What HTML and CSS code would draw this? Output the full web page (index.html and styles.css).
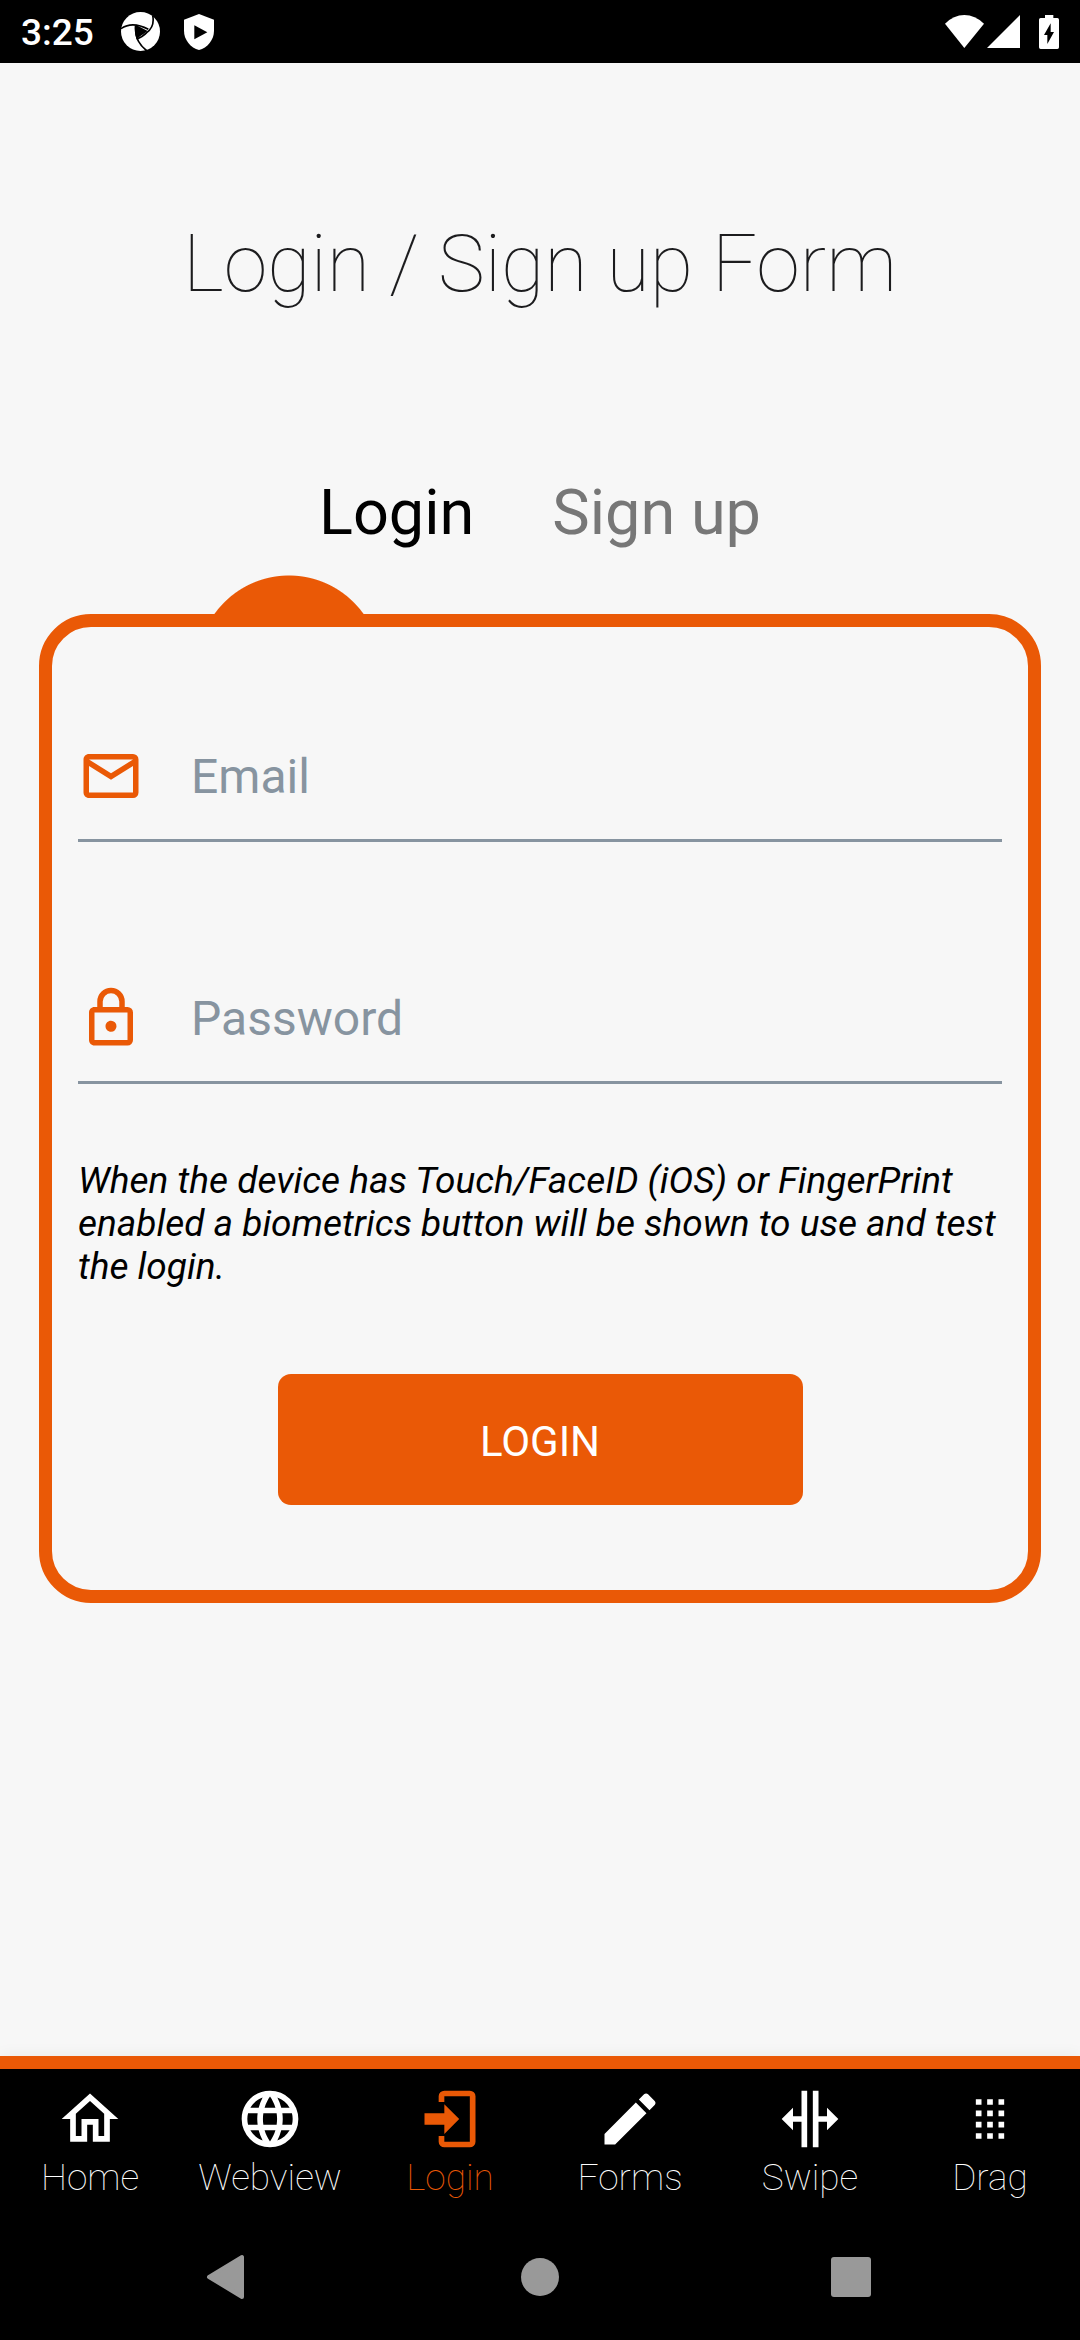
FILE: index.html
```html
<!DOCTYPE html>
<html lang="en">
<head>
<meta charset="utf-8">
<meta name="viewport" content="width=device-width, initial-scale=1">
<title>Login / Sign up Form</title>
<link rel="stylesheet" href="styles.css">
</head>
<body>
<header class="status-bar">
  <div class="status-left">
    <time class="clock">3:25</time>
    <svg class="app-icon" viewBox="0 0 117 117" aria-hidden="true">
      <circle cx="58.500" cy="58.500" r="58.500" fill="#fff"/>
      <path d="M44 38L80 57L46 81Q40 58 44 38Z" fill="#000"/>
      <path d="M0 50Q34 26 82 52M95 10Q102 44 77 62Q64 76 46 81M44 38Q38 86 78 117" fill="none" stroke="#000" stroke-width="5"/>
    </svg>
    <svg class="shield-icon" viewBox="0 0 90 108" aria-hidden="true">
      <path d="M45 0L90 17V50C90 78 70 101 45 108C20 101 0 78 0 50V17Z" fill="#fff"/>
      <path d="M31 34V76L70 55Z" fill="#000"/>
    </svg>
  </div>
  <div class="status-right">
    <svg class="wifi-icon" viewBox="0 0 117 99" aria-hidden="true"><path d="M0 26Q26 0 58 0T117 26L58 99Z" fill="#fff"/></svg>
    <svg class="signal-icon" viewBox="0 0 33 33" aria-hidden="true"><path d="M33 0V33H0Z" fill="#fff"/></svg>
    <svg class="battery-icon" viewBox="0 0 60 102" aria-hidden="true">
      <path d="M18 0H43V9H55Q60 9 60 14V97Q60 102 55 102H5Q0 102 0 97V14Q0 9 5 9H18Z" fill="#fff"/>
      <path d="M35 25V51H45L25 87V60H15Z" fill="#000"/>
    </svg>
  </div>
</header>

<main class="screen">
  <h1 class="title">Login / Sign up Form</h1>
  <div class="form-tabs" role="tablist">
    <button class="form-tab is-active" type="button" role="tab" aria-selected="true">Login</button>
    <button class="form-tab" type="button" role="tab" aria-selected="false">Sign up</button>
  </div>
  <form class="card">
    <div class="field">
      <label class="field-label" for="email" aria-label="Email">
        <svg class="field-icon" viewBox="0 0 24 24" aria-hidden="true"><path d="M4,4H20A2,2 0 0,1 22,6V18A2,2 0 0,1 20,20H4C2.890,20 2,19.100 2,18V6C2,4.890 2.890,4 4,4M12,11L20,6H4L12,11M4,18H20V8.370L12,13.360L4,8.370V18Z"/></svg>
      </label>
      <input class="field-input" id="email" type="email" placeholder="Email">
    </div>
    <div class="field">
      <label class="field-label" for="password" aria-label="Password">
        <svg class="field-icon" viewBox="0 0 24 24" aria-hidden="true"><path d="M12,17C10.890,17 10,16.100 10,15C10,13.890 10.890,13 12,13A2,2 0 0,1 14,15A2,2 0 0,1 12,17M18,20V10H6V20H18M18,8A2,2 0 0,1 20,10V20A2,2 0 0,1 18,22H6C4.890,22 4,21.100 4,20V10C4,8.890 4.890,8 6,8H7V6A5,5 0 0,1 12,1A5,5 0 0,1 17,6V8H18M12,3A3,3 0 0,0 9,6V8H15V6A3,3 0 0,0 12,3Z"/></svg>
      </label>
      <input class="field-input" id="password" type="password" placeholder="Password">
    </div>
    <p class="note">When the device has Touch/FaceID (iOS) or FingerPrint enabled a biometrics button will be shown to use and test the login.</p>
    <button class="submit" type="button">LOGIN</button>
  </form>
</main>

<nav class="tab-bar">
  <a class="tab" href="#home">
    <svg class="tab-icon" viewBox="0 0 24 24" aria-hidden="true"><path fill-rule="evenodd" d="M2 12L12 3L22 12H19V20H13V14H11V20H5V12ZM12 5.690L7 10.190V18H9V12H15V18H17V10.190Z"/></svg>
    <span>Home</span>
  </a>
  <a class="tab" href="#webview">
    <svg class="tab-icon" viewBox="0 0 24 24" aria-hidden="true"><path d="M16.360,14C16.440,13.340 16.500,12.680 16.500,12C16.500,11.320 16.440,10.660 16.360,10H19.740C19.900,10.640 20,11.310 20,12C20,12.690 19.900,13.360 19.740,14M14.590,19.560C15.190,18.450 15.650,17.250 15.970,16H18.920C17.960,17.650 16.430,18.930 14.590,19.560M14.340,14H9.660C9.560,13.340 9.500,12.680 9.500,12C9.500,11.320 9.560,10.650 9.660,10H14.340C14.430,10.650 14.500,11.320 14.500,12C14.500,12.680 14.430,13.340 14.340,14M12,19.960C11.170,18.760 10.500,17.430 10.090,16H13.910C13.500,17.430 12.830,18.760 12,19.960M8,8H5.080C6.030,6.340 7.570,5.060 9.400,4.440C8.800,5.550 8.350,6.750 8,8M5.080,16H8C8.350,17.250 8.800,18.450 9.400,19.560C7.570,18.930 6.030,17.650 5.080,16M4.260,14C4.100,13.360 4,12.690 4,12C4,11.310 4.100,10.640 4.260,10H7.640C7.560,10.660 7.500,11.320 7.500,12C7.500,12.680 7.560,13.340 7.640,14M12,4.030C12.830,5.230 13.500,6.570 13.910,8H10.090C10.500,6.570 11.170,5.230 12,4.030M18.920,8H15.970C15.650,6.750 15.190,5.550 14.590,4.440C16.430,5.070 17.960,6.340 18.920,8M12,2C6.470,2 2,6.500 2,12A10,10 0 0,0 12,22A10,10 0 0,0 22,12A10,10 0 0,0 12,2Z"/></svg>
    <span>Webview</span>
  </a>
  <a class="tab is-current" href="#login" aria-current="page">
    <svg class="tab-icon" viewBox="0 0 24 24" aria-hidden="true"><path d="M10,17.250V14H3V10H10V6.750L15.250,12L10,17.250M10,2H19A2,2 0 0,1 21,4V20A2,2 0 0,1 19,22H10A2,2 0 0,1 8,20V18H10V20H19V4H10V6H8V4A2,2 0 0,1 10,2Z"/></svg>
    <span>Login</span>
  </a>
  <a class="tab" href="#forms">
    <svg class="tab-icon" viewBox="0 0 24 24" aria-hidden="true"><path d="M20.710,7.040C21.100,6.650 21.100,6 20.710,5.630L18.370,3.290C18,2.900 17.350,2.900 16.960,3.290L15.120,5.120L18.870,8.870M3,17.250V21H6.750L17.810,9.930L14.060,6.180L3,17.250Z"/></svg>
    <span>Forms</span>
  </a>
  <a class="tab" href="#swipe">
    <svg class="tab-icon" viewBox="0 0 24 24" aria-hidden="true"><path d="M18,16V13H15V22H13V2H15V11H18V8L22,12L18,16M2,12L6,16V13H9V22H11V2H9V11H6V8L2,12Z"/></svg>
    <span>Swipe</span>
  </a>
  <a class="tab" href="#drag">
    <svg class="tab-icon" viewBox="0 0 24 24" aria-hidden="true"><path d="M7 5h2v2h-2zM11 5h2v2h-2zM15 5h2v2h-2zM7 9h2v2h-2zM11 9h2v2h-2zM15 9h2v2h-2zM7 13h2v2h-2zM11 13h2v2h-2zM15 13h2v2h-2zM7 17h2v2h-2zM11 17h2v2h-2zM15 17h2v2h-2z"/></svg>
    <span>Drag</span>
  </a>
</nav>

<footer class="system-nav">
  <button class="system-button" type="button" aria-label="Back">
    <svg class="system-icon" viewBox="0 0 48 48" aria-hidden="true"><path d="M4 24L37 4V44Z" stroke-width="4" stroke-linejoin="round"/></svg>
  </button>
  <button class="system-button" type="button" aria-label="Home">
    <svg class="system-icon" viewBox="0 0 48 48" aria-hidden="true"><circle cx="24" cy="24" r="19" stroke="none"/></svg>
  </button>
  <button class="system-button" type="button" aria-label="Overview">
    <svg class="system-icon" viewBox="0 0 48 48" aria-hidden="true"><rect x="4" y="4" width="40" height="40" rx="3" stroke="none"/></svg>
  </button>
</footer>
</body>
</html>
```

FILE: styles.css
```css
:root {
  --accent: #ea5906;
  --surface: #f7f7f7;
  --muted: #8794a0;
}

* { box-sizing: border-box; }

body {
  margin: 0;
  min-height: 100vh;
  display: flex;
  flex-direction: column;
  background: var(--surface);
  color: #000;
  font-family: Roboto, "Liberation Sans", sans-serif;
}

button, input { font-family: inherit; }

button {
  border: 0;
  padding: 0;
  background: none;
}

.status-bar {
  height: 63px;
  padding: 0 21px;
  display: flex;
  align-items: center;
  justify-content: space-between;
  background: #000;
  color: #fff;
}

.status-left, .status-right {
  display: flex;
  align-items: center;
}

.status-left { gap: 24px; }

.clock {
  font-size: 37px;
  line-height: 43px;
  font-weight: 500;
  padding-top: 2px;
}

.app-icon { width: 39px; height: 39px; margin-left: 3px; }
.shield-icon { width: 30px; height: 36px; }
.wifi-icon { width: 39px; height: 33px; }
.signal-icon { width: 33px; height: 33px; margin: 0 19px 0 3px; }
.battery-icon { width: 20px; height: 34px; }

.screen {
  flex: 1;
  padding: 155px 39px 64px;
}

.title {
  margin: 0;
  font-size: 79px;
  line-height: 92px;
  font-weight: 100;
  text-align: center;
  color: #1c1c1e;
}

.form-tabs {
  margin: 166px 0 64px;
  display: flex;
  justify-content: center;
  gap: 78px;
}

.form-tab {
  font-size: 63px;
  line-height: 74px;
  color: #777;
}

.form-tab.is-active { color: #000; }

.card {
  position: relative;
  padding: 116px 26px 85px;
  display: flex;
  flex-direction: column;
  border: 13px solid var(--accent);
  border-radius: 52px;
}

/* Half-moon marker that sits on the card's edge under the active tab */
.card::before {
  content: "";
  position: absolute;
  top: -52px;
  left: 145px;
  width: 184px;
  height: 52px;
  background: radial-gradient(circle at 50% 92px, var(--accent) 91px, transparent 92px);
}

.field {
  display: flex;
  align-items: center;
  gap: 47px;
  padding-bottom: 30px;
  border-bottom: 3px solid var(--muted);
}

.field + .field { margin-top: 143px; }

.field-label { display: flex; }

.field-icon {
  width: 66px;
  height: 66px;
  fill: var(--accent);
}

.field-input {
  flex: 1;
  min-width: 0;
  height: 66px;
  padding: 0;
  border: 0;
  outline: 0;
  background: none;
  font-size: 48px;
  color: #000;
}

.field-input::placeholder { color: var(--muted); opacity: 1; }

.note {
  margin: 75px 0 86px;
  font-size: 37px;
  line-height: 43px;
  font-style: italic;
}

.submit {
  align-self: center;
  width: 525px;
  max-width: 100%;
  padding: 43px 0 39px;
  border-radius: 13px;
  background: var(--accent);
  color: #fff;
  font-size: 42px;
  line-height: 49px;
}

.tab-bar {
  display: grid;
  grid-template-columns: repeat(6, 1fr);
  padding: 16px 0 15px;
  border-top: 13px solid var(--accent);
  background: #000;
  box-shadow: 0 0 16px rgba(0, 0, 0, 0.06);
}

.tab {
  display: flex;
  flex-direction: column;
  align-items: center;
  gap: 3px;
  color: #fff;
  font-size: 37px;
  line-height: 43px;
  font-weight: 100;
  text-decoration: none;
}

.tab.is-current { color: var(--accent); }

.tab-icon {
  width: 68px;
  height: 68px;
  fill: currentColor;
}

.system-nav {
  height: 126px;
  display: flex;
  justify-content: center;
  background: #000;
}

.system-button {
  flex: 0 1 311px;
  display: flex;
  align-items: center;
  justify-content: center;
}

.system-icon {
  width: 48px;
  height: 48px;
  fill: #999;
  stroke: #999;
}
```
